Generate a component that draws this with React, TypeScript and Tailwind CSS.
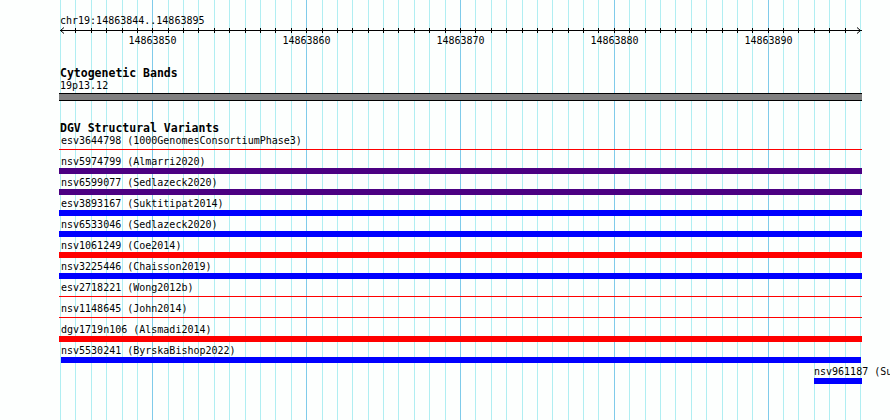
import React from 'react';

const LEFT = 60;
const BP = 800 / 52; // px per base
const mono = { fontFamily: '"DejaVu Sans Mono", "Liberation Mono", monospace' };

const variants: { name: string; src: string; color: string; thin?: boolean; inset?: boolean }[] = [
  { name: 'esv3644798', src: '1000GenomesConsortiumPhase3', color: '#ff0000', thin: true },
  { name: 'nsv5974799', src: 'Almarri2020', color: '#4b0082' },
  { name: 'nsv6599077', src: 'Sedlazeck2020', color: '#4b0082' },
  { name: 'esv3893167', src: 'Suktitipat2014', color: '#0000ff' },
  { name: 'nsv6533046', src: 'Sedlazeck2020', color: '#0000ff' },
  { name: 'nsv1061249', src: 'Coe2014', color: '#ff0000' },
  { name: 'nsv3225446', src: 'Chaisson2019', color: '#0000ff' },
  { name: 'esv2718221', src: 'Wong2012b', color: '#ff0000', thin: true },
  { name: 'nsv1148645', src: 'John2014', color: '#ff0000', thin: true },
  { name: 'dgv1719n106', src: 'Alsmadi2014', color: '#ff0000' },
  { name: 'nsv5530241', src: 'ByrskaBishop2022', color: '#0000ff', inset: true },
];

const gx = (i: number) => Math.round(LEFT + i * BP);

function Gridlines() {
  return (
    <div className="absolute inset-0">
      {Array.from({ length: 53 }, (_, i) => (
        <div
          key={i}
          className={`absolute top-0 h-full w-px ${(i - 6) % 10 === 0 ? 'bg-[#7fcbea]' : 'bg-[#b0eef2]'}`}
          style={{ left: gx(i) }}
        />
      ))}
    </div>
  );
}

function Ruler() {
  const ticks = Array.from({ length: 51 }, (_, i) => i + 1);
  return (
    <div className="ml-[59px]">
      <div className="h-[11px] pl-px text-[10px] leading-[12px] text-black">chr19:14863844..14863895</div>
      <svg width="806" height="9" className="block" shapeRendering="crispEdges">
        <line x1="1" y1="4.5" x2="803" y2="4.5" stroke="#000" strokeWidth="1" />
        {ticks.map((i) => {
          const x = gx(i) - 59 + 0.5;
          return <line key={i} x1={x} y1="2" x2={x} y2="7" stroke="#000" strokeWidth="1" />;
        })}
        <polyline points="5,1.5 1.5,4.5 5,7.5" fill="none" stroke="#000" strokeWidth="1" shapeRendering="auto" />
        <polyline points="798,1.5 801.5,4.5 798,7.5" fill="none" stroke="#000" strokeWidth="1" shapeRendering="auto" />
      </svg>
      <div className="relative h-[12px] text-[10px] leading-[12px] text-black">
        {[6, 16, 26, 36, 46].map((i, k) => (
          <span key={i} className="absolute top-0 -translate-x-1/2" style={{ left: gx(i) - 59 + 0.5 }}>
            {14863850 + k * 10}
          </span>
        ))}
      </div>
    </div>
  );
}

export default function App() {
  return (
    <div className="relative w-[890px] h-[420px] overflow-hidden bg-[#fdfffe]" style={mono}>
      <Gridlines />
      <div className="relative pt-[15px]">
        <Ruler />

        <div className="mt-[20px] ml-[60px] h-[13px] text-[11.5px] leading-[13px] font-bold text-black">Cytogenetic Bands</div>
        <div className="ml-[60px] h-[12px] text-[10px] leading-[12px] text-black">19p13.12</div>
        <div className="mt-px ml-[59px] w-[803px] h-[8px] bg-[#808080] border-y border-black" />

        <div className="mt-[21px] ml-[60px] h-[13px] text-[11.5px] leading-[13px] font-bold text-black">DGV Structural Variants</div>

        <div className="flex flex-col gap-[3px]">
          {variants.map((v) => (
            <div key={v.name} className="flex flex-col">
              <div className="ml-[61px] h-[12px] whitespace-pre text-[10px] leading-[12px] text-black">{`${v.name} (${v.src})`}</div>
              <div className="h-[6px]">
                {v.thin ? (
                  <div className="mt-[2px] ml-[59px] w-[803px] h-px" style={{ backgroundColor: v.color }} />
                ) : (
                  <div
                    className={v.inset ? 'ml-[61px] w-[800px] h-[6px]' : 'ml-[59px] w-[803px] h-[6px]'}
                    style={{ backgroundColor: v.color }}
                  />
                )}
              </div>
            </div>
          ))}
          <div className="flex flex-col">
            <div className="ml-[814px] h-[12px] whitespace-pre text-[10px] leading-[12px] text-black">nsv961187 (Sudmant2015)</div>
            <div className="ml-[814px] w-[48px] h-[6px] bg-[#0000ff]" />
          </div>
        </div>
      </div>
    </div>
  );
}
